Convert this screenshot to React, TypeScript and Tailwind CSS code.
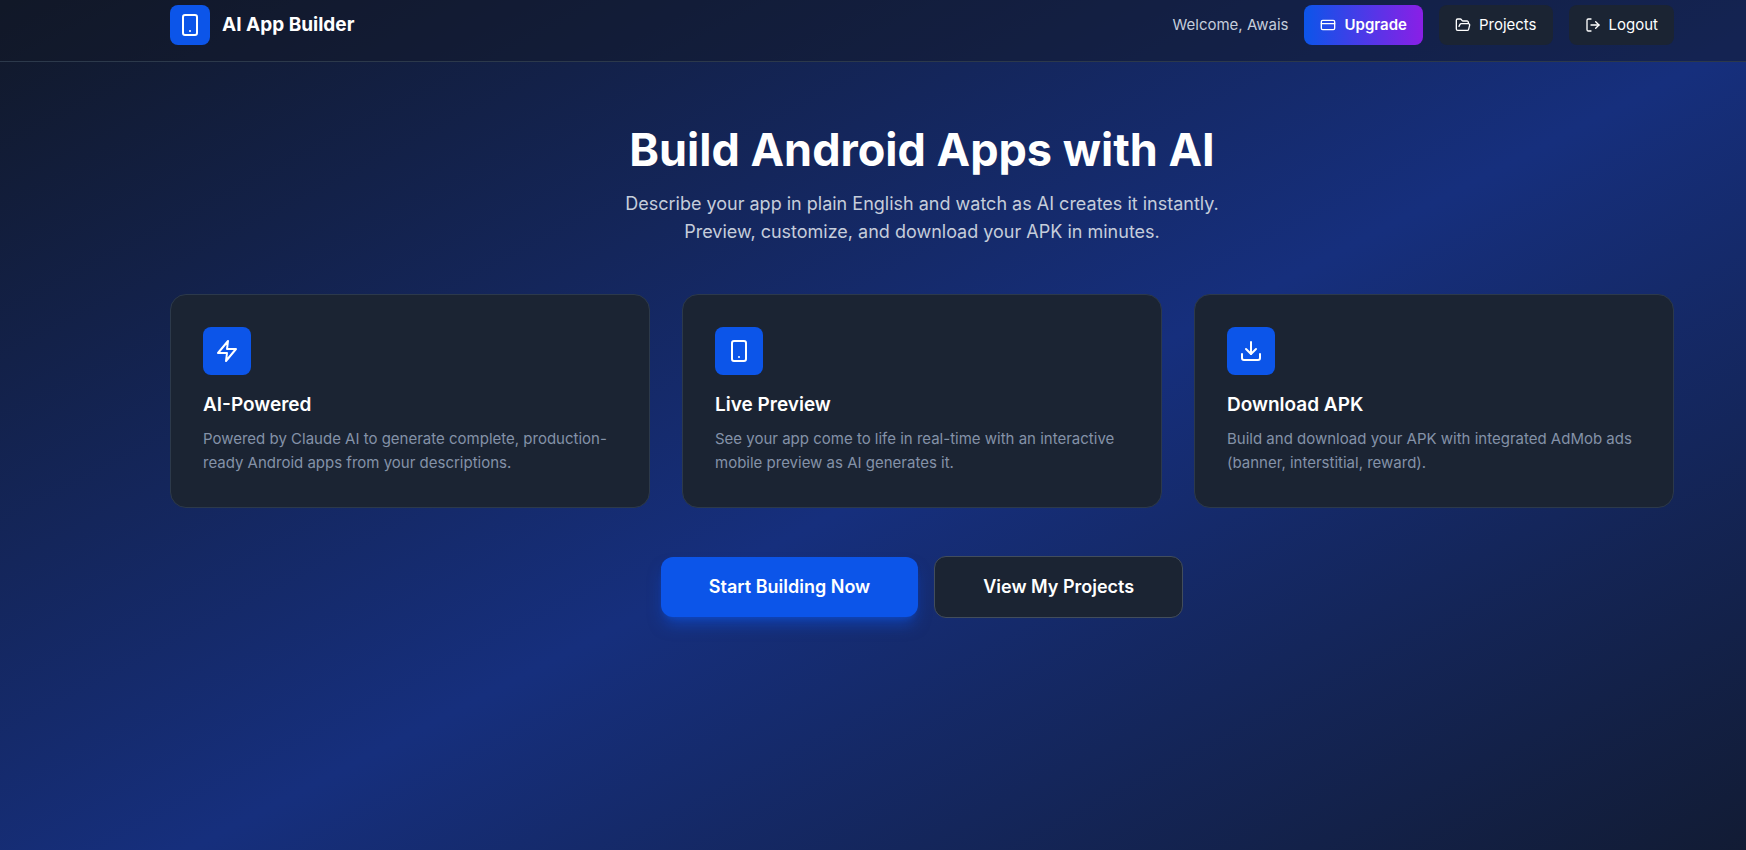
import { CreditCard, Download, FolderOpen, LogOut, Smartphone } from 'lucide-react'

// Sharp-cornered bolt, the lucide one is rounded
function Bolt({ className }: { className?: string }) {
  return (
    <svg
      className={className}
      viewBox="0 0 24 24"
      fill="none"
      stroke="currentColor"
      strokeWidth="2"
      strokeLinecap="round"
      strokeLinejoin="round"
      aria-hidden="true"
    >
      <polygon points="13 2 3 14 12 14 11 22 21 10 12 10 13 2" />
    </svg>
  )
}

const FEATURES = [
  {
    icon: Bolt,
    title: 'AI-Powered',
    text: 'Powered by Claude AI to generate complete, production-ready Android apps from your descriptions.',
  },
  {
    icon: Smartphone,
    title: 'Live Preview',
    text: 'See your app come to life in real-time with an interactive mobile preview as AI generates it.',
  },
  {
    icon: Download,
    title: 'Download APK',
    text: 'Build and download your APK with integrated AdMob ads (banner, interstitial, reward).',
  },
]

function Header() {
  return (
    <header className="border-b border-[#2c394b] bg-[#111827]/50">
      <div className="flex items-center justify-between pt-[5px] pb-4 pl-[170px] pr-[72px]">
        <div className="flex items-center gap-3">
          <div className="w-10 h-10 rounded-lg bg-[#0c55e9] flex items-center justify-center">
            <Smartphone className="w-6 h-6" />
          </div>
          <span className="text-[19px] leading-7 font-bold">AI App Builder</span>
        </div>

        <div className="flex items-center gap-4 text-[15px] leading-6">
          <span className="text-[#c5cddb]">Welcome, Awais</span>
          <button className="flex items-center gap-2 px-4 py-2 rounded-lg bg-linear-to-r/srgb from-[#0c55e9] to-[#8a1fe6] font-semibold">
            <CreditCard className="w-4 h-4" />
            Upgrade
          </button>
          <button className="flex items-center gap-2 px-4 py-2 rounded-lg bg-[#1b2433]">
            <FolderOpen className="w-4 h-4" />
            Projects
          </button>
          <button className="flex items-center gap-2 px-4 py-2 rounded-lg bg-[#1b2433]">
            <LogOut className="w-4 h-4" />
            Logout
          </button>
        </div>
      </div>
    </header>
  )
}

export default function App() {
  return (
    <div className="min-h-screen overflow-hidden bg-linear-to-br/srgb from-[#111827] via-[#162f7d] to-[#111827] bg-[size:1844px_958px] bg-[position:0_-11px] font-['Inter',sans-serif] text-white">
      <Header />

      <main className="pt-16 pb-16 pl-[170px] pr-[72px]">
        {/* Hero */}
        <div className="text-center mb-12">
          <h1 className="text-[45px] leading-[48px] font-bold mb-4">Build Android Apps with AI</h1>
          <p className="text-[18px] leading-7 text-[#c5cddb] max-w-[640px] mx-auto">
            Describe your app in plain English and watch as AI creates it instantly. Preview, customize, and
            download your APK in minutes.
          </p>
        </div>

        {/* Features */}
        <div className="grid grid-cols-3 gap-8 mb-12">
          {FEATURES.map(({ icon: Icon, title, text }) => (
            <div key={title} className="rounded-2xl border border-[#2c394b] bg-[#1b2433] p-8">
              <div className="w-12 h-12 rounded-lg bg-[#0c55e9] flex items-center justify-center mb-4">
                <Icon className="w-6 h-6" />
              </div>
              <h3 className="text-[19px] leading-7 font-semibold mb-2">{title}</h3>
              <p className="text-[15px] leading-6 text-[#8492a8]">{text}</p>
            </div>
          ))}
        </div>

        {/* Actions */}
        <div className="flex items-center justify-center gap-4">
          <button className="px-12 py-4 rounded-xl bg-[#0c55e9] text-[18px] leading-7 font-semibold shadow-lg shadow-[#0c55e9]/50">
            Start Building Now
          </button>
          <button className="px-12 py-4 rounded-xl border border-[#424d5c] bg-[#1b2433] text-[18px] leading-7 font-semibold">
            View My Projects
          </button>
        </div>
      </main>
    </div>
  )
}
